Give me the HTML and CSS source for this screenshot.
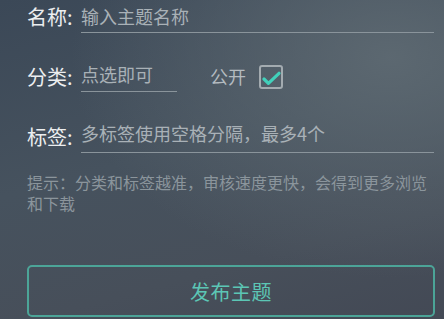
FILE: index.html
```html
<!DOCTYPE html>
<html lang="zh-CN">
<head>
<meta charset="utf-8">
<link rel="stylesheet" href="styles.css">
</head>
<body>
<div class="page">
  <div class="row row-name">
    <span class="lbl">名称:</span>
    <div class="field field-wide pad-1">输入主题名称</div>
  </div>
  <div class="row row-cat">
    <span class="lbl lbl-2">分类:</span>
    <div class="field field-short pad-2">点选即可</div>
    <span class="pub">公开</span>
    <span class="check">
      <svg width="20" height="20" viewBox="0 0 20 20"><path d="M3 12 L7.4 16.3 L18 6.3" fill="none" stroke="#41d1bb" stroke-width="3.2" stroke-linecap="round" stroke-linejoin="round"/></svg>
    </span>
  </div>
  <div class="row row-tag">
    <span class="lbl">标签:</span>
    <div class="field field-wide pad-3">多标签使用空格分隔，最多4个</div>
  </div>
  <p class="hint">提示：分类和标签越准，审核速度更快，会得到更多浏览和下载</p>
  <div class="btn">发布主题</div>
</div>
</body>
</html>
```
FILE: styles.css
```css
html, body {
  margin: 0;
  padding: 0;
}
body {
  width: 444px;
  height: 319px;
  overflow: hidden;
  font-family: "Noto Sans CJK SC", "Noto Sans", sans-serif;
  background:
    radial-gradient(ellipse 320px 220px at 88% 18%, rgba(96,108,116,0.85) 0%, rgba(96,108,116,0) 100%),
    linear-gradient(165deg, #3b4857 0%, #46525e 45%, #474f5a 75%, #434955 100%);
}
.page {
  padding: 0 9px 0 27px;
}
.row {
  display: flex;
  align-items: flex-end;
}
.row-name { margin-top: 7px; }
.row-cat { margin-top: 32px; }
.row-tag { margin-top: 32px; }
.lbl {
  width: 54px;
  flex: none;
  font-size: 20px;
  line-height: 20px;
  color: #eceef0;
  margin-bottom: 6px;
}
.lbl-2 { margin-bottom: 5px; }
.field {
  font-size: 18px;
  line-height: 18px;
  color: #a9b1b7;
  border-bottom: 1px solid #8a949b;
  white-space: nowrap;
}
.field-wide { flex: 1; margin-right: 1px; }
.field-short { width: 96px; }
.pad-1 { padding-bottom: 7px; }
.pad-2 { padding-bottom: 8px; }
.pad-3 { padding-bottom: 10px; }
.pub {
  margin-left: 33px;
  font-size: 18px;
  line-height: 18px;
  color: #b4bbc0;
  margin-bottom: 7px;
}
.check {
  box-sizing: border-box;
  width: 24px;
  height: 24px;
  margin-left: 13px;
  margin-bottom: 3px;
  border: 2px solid #a3abb0;
  border-radius: 3px;
  display: flex;
}
.check svg { display: block; }
.hint {
  margin: 19px 0 0 0;
  font-size: 16px;
  line-height: 21px;
  color: #8b959c;
}
.btn {
  box-sizing: border-box;
  margin-top: 51px;
  height: 52px;
  border: 2px solid rgba(78, 186, 168, 0.8);
  border-radius: 5px;
  display: flex;
  align-items: center;
  justify-content: center;
  font-size: 20px;
  color: #5cc6b5;
  letter-spacing: 0.5px;
}
```
